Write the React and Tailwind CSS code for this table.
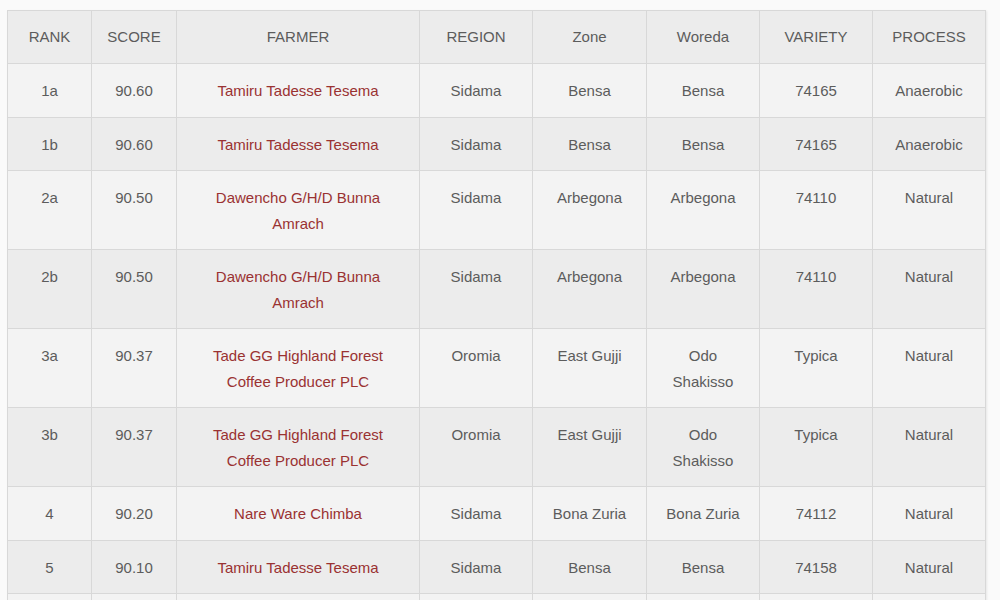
const rows = [
  ["1a", "90.60", "Tamiru Tadesse Tesema", "Sidama", "Bensa", "Bensa", "74165", "Anaerobic"],
  ["1b", "90.60", "Tamiru Tadesse Tesema", "Sidama", "Bensa", "Bensa", "74165", "Anaerobic"],
  ["2a", "90.50", "Dawencho G/H/D Bunna Amrach", "Sidama", "Arbegona", "Arbegona", "74110", "Natural"],
  ["2b", "90.50", "Dawencho G/H/D Bunna Amrach", "Sidama", "Arbegona", "Arbegona", "74110", "Natural"],
  ["3a", "90.37", "Tade GG Highland Forest Coffee Producer PLC", "Oromia", "East Gujji", "Odo Shakisso", "Typica", "Natural"],
  ["3b", "90.37", "Tade GG Highland Forest Coffee Producer PLC", "Oromia", "East Gujji", "Odo Shakisso", "Typica", "Natural"],
  ["4", "90.20", "Nare Ware Chimba", "Sidama", "Bona Zuria", "Bona Zuria", "74112", "Natural"],
  ["5", "90.10", "Tamiru Tadesse Tesema", "Sidama", "Bensa", "Bensa", "74158", "Natural"],
  ["6", "90.05", "Tamiru Tadesse Tesema", "Sidama", "Bensa", "Bensa", "74158", "Natural"],
];

const headers = ["RANK", "SCORE", "FARMER", "REGION", "Zone", "Woreda", "VARIETY", "PROCESS"];
const widths = ["w-[84px]", "w-[85px]", "w-[243px]", "w-[113px]", "w-[114px]", "w-[113px]", "w-[113px]", "w-[113px]"];

export default function App() {
  return (
    <div className="min-h-screen bg-[#fafafa] pt-[10px] pl-[7px] font-['Liberation_Sans',Arial,sans-serif] text-[15px] text-[#5c5c5c]">
      <table className="table-fixed w-[979px] border-collapse border border-[#d8d8d8] shadow-[1px_1px_2px_rgba(0,0,0,0.08)]">
        <thead>
          <tr className="bg-[#ececec]">
            {headers.map((h, i) => (
              <th key={h} className={`${widths[i]} h-[53px] border border-[#d8d8d8] px-2 text-center align-middle font-normal leading-[26px]`}>
                {h}
              </th>
            ))}
          </tr>
        </thead>
        <tbody>
          {rows.map((r, ri) => (
            <tr key={ri} className={ri % 2 === 0 ? "bg-[#f3f3f3]" : "bg-[#ececec]"}>
              {r.map((c, ci) => (
                <td
                  key={ci}
                  className={`border border-[#d8d8d8] px-[14px] pt-[14px] pb-[13px] text-center align-top leading-[25.5px] ${ci === 2 ? "text-[#9a3232]" : ""}`}
                >
                  {c}
                </td>
              ))}
            </tr>
          ))}
        </tbody>
      </table>
    </div>
  );
}
